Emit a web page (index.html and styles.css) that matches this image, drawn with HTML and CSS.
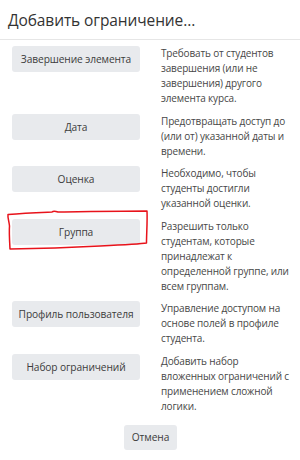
FILE: index.html
```html
<!DOCTYPE html>
<html lang="ru">
<head>
<meta charset="utf-8">
<link rel="stylesheet" href="styles.css">
</head>
<body>
<div class="dialog">
  <div class="header"><h1 class="title">Добавить ограничение...</h1></div>
  <div class="content">
    <div class="row">
      <button class="btn">Завершение элемента</button>
      <p class="desc">Требовать от студентов<br>завершения (или не<br>завершения) другого<br>элемента курса.</p>
    </div>
    <div class="row">
      <button class="btn">Дата</button>
      <p class="desc">Предотвращать доступ до<br>(или от) указанной даты и<br>времени.</p>
    </div>
    <div class="row">
      <button class="btn">Оценка</button>
      <p class="desc">Необходимо, чтобы<br>студенты достигли<br>указанной оценки.</p>
    </div>
    <div class="row">
      <button class="btn">Группа</button>
      <p class="desc">Разрешить только<br>студентам, которые<br>принадлежат к<br>определенной группе, или<br>всем группам.</p>
    </div>
    <div class="row">
      <button class="btn">Профиль пользователя</button>
      <p class="desc">Управление доступом на<br>основе полей в профиле<br>студента.</p>
    </div>
    <div class="row">
      <button class="btn">Набор ограничений</button>
      <p class="desc">Добавить набор<br>вложенных ограничений с<br>применением сложной<br>логики.</p>
    </div>
  </div>
  <div class="footer"><button class="btn btn-cancel">Отмена</button></div>
  <svg class="mark" width="160" height="50" viewBox="0 205 160 50" fill="none" stroke="#e8131b" stroke-width="1.5" stroke-linecap="round" stroke-linejoin="round">
    <path d="M8 214.5 C25 213 40 212.5 52 212 C53 211 55 211 58 212 C90 211.5 120 211 147 211 C147.5 222 146.5 233 146.5 243 C140 244 120 245 100 246 C70 247.5 40 248.5 10 249 C9.5 240 9 232 9.5 226 C9 221 7.5 217 8 214.5 Z"/>
  </svg>
</div>
</body>
</html>
```

FILE: styles.css
```css
html, body {
  margin: 0;
  padding: 0;
  background: #fff;
}
body {
  font-family: "Open Sans", "Noto Sans", sans-serif;
  color: #3a3a3a;
  width: 300px;
  height: 460px;
  overflow: hidden;
}
.dialog {
  position: relative;
}
.header {
  height: 39px;
  border-bottom: 1px solid #e6e6e6;
  display: flex;
  align-items: center;
  padding-left: 8px;
}
.title {
  margin: 0;
  font-size: 15.5px;
  font-weight: 400;
  color: #333;
  letter-spacing: -0.1px;
}
.content {
  display: flex;
  flex-direction: column;
  gap: 7.5px;
  padding: 6px 0 0 12px;
}
.row {
  display: grid;
  grid-template-columns: 128px 1fr;
  column-gap: 21px;
  align-items: start;
}
.btn {
  height: 26px;
  border: none;
  border-radius: 3px;
  background: #e8eaed;
  font-family: inherit;
  font-size: 10.2px;
  letter-spacing: -0.1px;
  color: #3c3c3c;
  padding: 0;
  white-space: nowrap;
}
.desc {
  margin: 0;
  font-size: 10px;
  letter-spacing: -0.15px;
  line-height: 15px;
  color: #474747;
  white-space: nowrap;
}
.footer {
  display: flex;
  justify-content: center;
  padding-top: 11px;
}
.btn-cancel {
  width: 53px;
  height: 25px;
  margin-left: 1px;
}
.mark {
  position: absolute;
  left: 0;
  top: 205px;
}
```
